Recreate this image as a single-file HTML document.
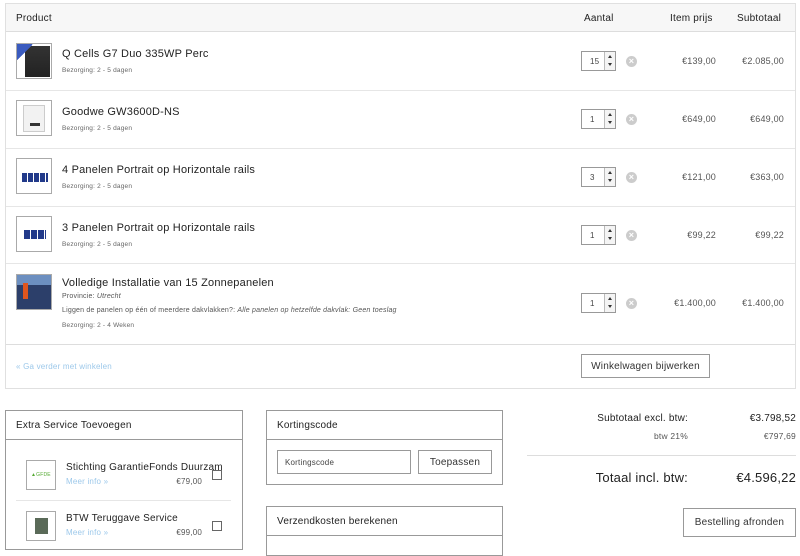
<!DOCTYPE html>
<html><head><meta charset="utf-8"><style>
*{margin:0;padding:0;box-sizing:border-box}
body{width:800px;height:543px;background:#fff;font-family:"Liberation Sans",sans-serif;color:#333;position:relative;overflow:hidden;letter-spacing:0.2px}
.a{position:absolute;white-space:nowrap}
.t{font-size:11px;color:#222}
.s{font-size:6.5px;color:#666}
.r{text-align:right}
.img{position:absolute;width:36px;height:36px;border:1px solid #aaa;background:#fff;overflow:hidden}
.q{position:absolute;left:581px;width:35px;height:20px;border:1px solid #999;font-size:8px;color:#444;background:#fff}
.q span{position:absolute;left:8px;top:5px}
.q i{position:absolute;right:0;top:0;width:11px;height:18px;border-left:1px solid #bbb;background:#f4f4f4}
.q i:before{content:"";position:absolute;left:3px;top:3px;border:2.5px solid transparent;border-bottom:3px solid #333;border-top:0}
.q i:after{content:"";position:absolute;left:3px;top:11px;border:2.5px solid transparent;border-top:3px solid #333;border-bottom:0}
.x{position:absolute;left:626px;width:11px;height:11px;border-radius:50%;background:#ccc;color:#fff;font-size:9px;line-height:11px;text-align:center;font-weight:bold}
.p{font-size:9px;color:#555}
.line{position:absolute;height:1px;background:#e6e6e6}
.box{position:absolute;border:1px solid #999}
.btn{position:absolute;border:1px solid #999;font-size:10px;color:#333;background:#fff;display:flex;align-items:center;justify-content:center}
</style></head><body>
<div class="box" style="left:5px;top:3px;width:791px;height:386px;border-color:#e0e0e0"></div>
<div class="a" style="left:6px;top:4px;width:789px;height:28px;background:#f7f7f7;border-bottom:1px solid #ddd"></div>
<div class="a t" style="left:16px;top:13px;font-size:10px">Product</div>
<div class="a t" style="left:584px;top:13px;font-size:10px">Aantal</div>
<div class="a t" style="left:670px;top:13px;font-size:10px">Item prijs</div>
<div class="a t" style="left:737px;top:13px;font-size:10px">Subtotaal</div>

<div class="line" style="left:6px;width:789px;top:90px"></div>
<div class="line" style="left:6px;width:789px;top:148px"></div>
<div class="line" style="left:6px;width:789px;top:206px"></div>
<div class="line" style="left:6px;width:789px;top:263px"></div>
<div class="line" style="left:6px;width:789px;top:344px;background:#ddd"></div>

<!-- row1 -->
<div class="img" style="left:16px;top:43px"><div style="position:absolute;left:8px;top:2px;width:25px;height:31px;background:linear-gradient(#333,#222)"></div><div style="position:absolute;left:0;top:0;width:16px;height:16px;background:linear-gradient(135deg,#3a5bbf 50%,transparent 50%)"></div></div>
<div class="a t" style="left:62px;top:48px">Q Cells G7 Duo 335WP Perc</div>
<div class="a s" style="left:62px;top:67px">Bezorging: 2 - 5 dagen</div>
<div class="q" style="top:51px"><span>15</span><i></i></div>
<div class="x" style="top:56px">×</div>
<div class="a p r" style="left:640px;width:76px;top:56px">€139,00</div>
<div class="a p r" style="left:720px;width:64px;top:56px">€2.085,00</div>

<!-- row2 -->
<div class="img" style="left:16px;top:100px"><div style="position:absolute;left:6px;top:4px;width:22px;height:27px;background:#f2f2f2;border:1px solid #ccc"></div><div style="position:absolute;left:13px;top:22px;width:10px;height:3px;background:#333"></div></div>
<div class="a t" style="left:62px;top:106px">Goodwe GW3600D-NS</div>
<div class="a s" style="left:62px;top:125px">Bezorging: 2 - 5 dagen</div>
<div class="q" style="top:109px"><span>1</span><i></i></div>
<div class="x" style="top:114px">×</div>
<div class="a p r" style="left:640px;width:76px;top:114px">€649,00</div>
<div class="a p r" style="left:720px;width:64px;top:114px">€649,00</div>

<!-- row3 -->
<div class="img" style="left:16px;top:158px"><div style="position:absolute;left:5px;top:14px;width:26px;height:9px;background:repeating-linear-gradient(90deg,#223a8a 0 5px,#fff 5px 6px)"></div></div>
<div class="a t" style="left:62px;top:164px">4 Panelen Portrait op Horizontale rails</div>
<div class="a s" style="left:62px;top:183px">Bezorging: 2 - 5 dagen</div>
<div class="q" style="top:167px"><span>3</span><i></i></div>
<div class="x" style="top:172px">×</div>
<div class="a p r" style="left:640px;width:76px;top:172px">€121,00</div>
<div class="a p r" style="left:720px;width:64px;top:172px">€363,00</div>

<!-- row4 -->
<div class="img" style="left:16px;top:216px"><div style="position:absolute;left:7px;top:13px;width:22px;height:9px;background:repeating-linear-gradient(90deg,#223a8a 0 6px,#fff 6px 7px)"></div></div>
<div class="a t" style="left:62px;top:222px">3 Panelen Portrait op Horizontale rails</div>
<div class="a s" style="left:62px;top:241px">Bezorging: 2 - 5 dagen</div>
<div class="q" style="top:225px"><span>1</span><i></i></div>
<div class="x" style="top:230px">×</div>
<div class="a p r" style="left:640px;width:76px;top:230px">€99,22</div>
<div class="a p r" style="left:720px;width:64px;top:230px">€99,22</div>

<!-- row5 -->
<div class="img" style="left:16px;top:274px;height:36px;background:linear-gradient(#6c8fc0 0 30%,#2c3f6a 30%)"><div style="position:absolute;left:6px;top:8px;width:5px;height:16px;background:#e0561e"></div></div>
<div class="a t" style="left:62px;top:277px">Volledige Installatie van 15 Zonnepanelen</div>
<div class="a" style="left:62px;top:293px;font-size:7px;color:#555">Provincie: <i>Utrecht</i></div>
<div class="a" style="left:62px;top:307px;font-size:7px;color:#555">Liggen de panelen op één of meerdere dakvlakken?: <i>Alle panelen op hetzelfde dakvlak: Geen toeslag</i></div>
<div class="a s" style="left:62px;top:322px">Bezorging: 2 - 4 Weken</div>
<div class="q" style="top:293px"><span>1</span><i></i></div>
<div class="x" style="top:298px">×</div>
<div class="a p r" style="left:640px;width:76px;top:298px">€1.400,00</div>
<div class="a p r" style="left:720px;width:64px;top:298px">€1.400,00</div>

<div class="a" style="left:16px;top:362px;font-size:8px;color:#9cc8ea">« Ga verder met winkelen</div>
<div class="btn" style="left:581px;top:354px;width:129px;height:24px">Winkelwagen bijwerken</div>

<!-- Extra service -->
<div class="box" style="left:5px;top:410px;width:238px;height:140px"></div>
<div class="line" style="left:5px;width:238px;top:439px;background:#999"></div>
<div class="a t" style="left:16px;top:420px;font-size:10px">Extra Service Toevoegen</div>
<div class="img" style="left:26px;top:460px;width:30px;height:30px"><div style="position:absolute;left:4px;top:11px;font-size:5px;color:#5a3">▲GFDE</div></div>
<div class="a t" style="left:66px;top:462px;font-size:10px">Stichting GarantieFonds Duurzam</div>
<div class="a" style="left:66px;top:477px;font-size:8px;color:#9cc8ea">Meer info »</div>
<div class="a p r" style="left:150px;width:52px;top:477px;font-size:8px">€79,00</div>
<div class="a" style="left:212px;top:470px;width:10px;height:10px;border:1px solid #666"></div>
<div class="line" style="left:16px;width:215px;top:500px"></div>
<div class="img" style="left:26px;top:511px;width:30px;height:30px"><div style="position:absolute;left:8px;top:6px;width:13px;height:16px;background:#5a6a58"></div></div>
<div class="a t" style="left:66px;top:513px;font-size:10px">BTW Teruggave Service</div>
<div class="a" style="left:66px;top:528px;font-size:8px;color:#9cc8ea">Meer info »</div>
<div class="a p r" style="left:150px;width:52px;top:528px;font-size:8px">€99,00</div>
<div class="a" style="left:212px;top:521px;width:10px;height:10px;border:1px solid #666"></div>

<!-- Kortingscode -->
<div class="box" style="left:266px;top:410px;width:237px;height:75px"></div>
<div class="line" style="left:266px;width:237px;top:439px;background:#999"></div>
<div class="a t" style="left:277px;top:420px;font-size:10px">Kortingscode</div>
<div class="a" style="left:277px;top:450px;width:134px;height:24px;border:1px solid #999;font-size:8px;color:#444;padding:7px 0 0 7px">Kortingscode</div>
<div class="btn" style="left:418px;top:450px;width:74px;height:24px">Toepassen</div>

<div class="box" style="left:266px;top:506px;width:237px;height:50px"></div>
<div class="line" style="left:266px;width:237px;top:535px;background:#999"></div>
<div class="a t" style="left:277px;top:516px;font-size:10px">Verzendkosten berekenen</div>

<!-- totals -->
<div class="a t r" style="left:560px;width:128px;top:413px;font-size:10px">Subtotaal excl. btw:</div>
<div class="a t r" style="left:700px;width:96px;top:413px;font-size:10px">€3.798,52</div>
<div class="a p r" style="left:600px;width:88px;top:431px;font-size:8.5px">btw 21%</div>
<div class="a p r" style="left:700px;width:96px;top:431px;font-size:8.5px">€797,69</div>
<div class="line" style="left:527px;width:269px;top:455px;background:#ddd"></div>
<div class="a t r" style="left:560px;width:128px;top:470px;font-size:13px">Totaal incl. btw:</div>
<div class="a t r" style="left:700px;width:96px;top:470px;font-size:13px">€4.596,22</div>
<div class="btn" style="left:683px;top:508px;width:113px;height:29px">Bestelling afronden</div>
</body></html>
